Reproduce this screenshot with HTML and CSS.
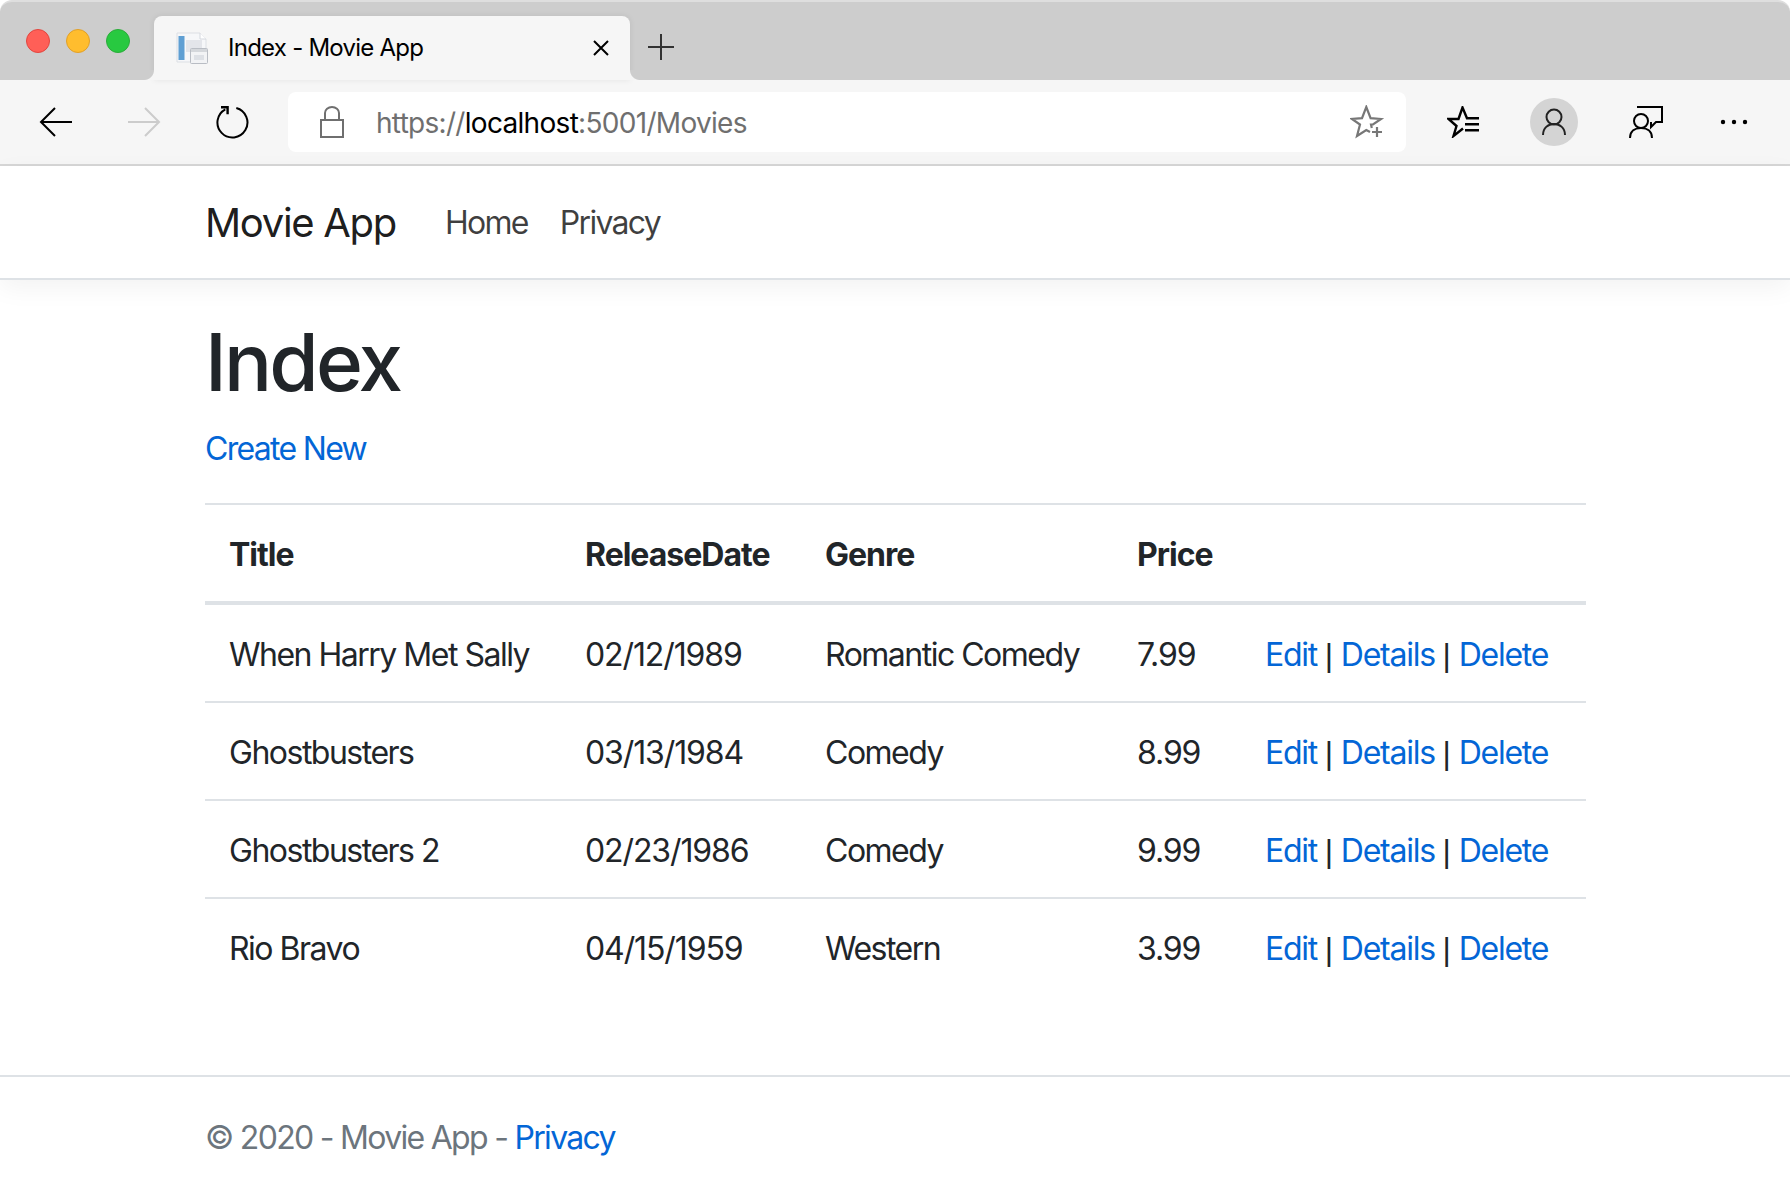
FILE: index.html
```html
<!DOCTYPE html>
<html lang="en">
<head>
    <meta charset="UTF-8">
    <title>Index - Movie App</title>
    <link rel="stylesheet" href="styles.css">
</head>
<body>

<div class="tabstrip">
    <span class="light light-red"></span>
    <span class="light light-yellow"></span>
    <span class="light light-green"></span>
    <div class="tab">
        <svg class="favicon" width="32" height="32" viewBox="0 0 32 32">
            <path d="M1 1h23l6 6v23H1z" fill="#f6f7f9" stroke="#dcdfe4"/>
            <rect x="2.500" y="4" width="6" height="24" fill="#5f9fd3"/>
            <rect x="10" y="8" width="16" height="12" fill="#e3e5ea"/>
            <path d="M24 1v6h6" fill="#fff" stroke="#d5d8de"/>
            <rect x="14.500" y="16.500" width="17" height="15" rx="1" fill="#f2f3f5" stroke="#b9bdc4"/>
            <rect x="15" y="17" width="16" height="3" fill="#d4d7db"/>
            <rect x="18" y="23" width="10" height="5" fill="#dde0e5"/>
        </svg>
        <span class="tab-title">Index - Movie App</span>
        <svg class="tab-close" width="18" height="18" viewBox="0 0 18 18">
            <path d="M2 2l14 14M16 2L2 16" stroke="#000" stroke-width="2" fill="none"/>
        </svg>
    </div>
    <svg class="tab-new" width="28" height="28" viewBox="0 0 28 28">
        <path d="M14 1v26M1 14h26" stroke="#333" stroke-width="2" fill="none"/>
    </svg>
</div>

<div class="toolbar">
    <span class="tool">
        <svg width="34" height="30" viewBox="0 0 34 30"><path d="M33 15H2M16 1L2 15l14 14" stroke="#000" stroke-width="2" fill="none"/></svg>
    </span>
    <span class="tool">
        <svg width="34" height="30" viewBox="0 0 34 30"><path d="M1 15h31M18 1l14 14-14 14" stroke="#ccc" stroke-width="2" fill="none"/></svg>
    </span>
    <span class="tool">
        <svg width="34" height="34" viewBox="0 0 34 34"><path d="M21.300 3A15 15 0 1 1 10.300 4.300" stroke="#000" stroke-width="2" fill="none"/><path d="M6 2.300h6.600v7" stroke="#000" stroke-width="2.400" fill="none"/></svg>
    </span>
    <div class="address">
        <svg class="lock" width="24" height="32" viewBox="0 0 24 32">
            <path d="M5 14V7a7 6 0 0 1 14 0v7" stroke="#6f6f6f" stroke-width="2" fill="none"/>
            <rect x="1" y="14" width="22" height="17" stroke="#6f6f6f" stroke-width="2" fill="none"/>
        </svg>
        <span class="url">https://<span class="url-host">localhost</span>:5001/Movies</span>
        <svg class="star-add" width="36" height="34" viewBox="0 0 36 34">
            <path d="M20 27l-3.700-2L7 31l3-11.500L2 14l10-.8L16.300 2l4.300 11.200 10.400.8-8 5.500-2 0 .8 3.500" stroke="#777" stroke-width="2.200" stroke-linejoin="miter" fill="none"/>
            <path d="M27 22v10M22 27h10" stroke="#777" stroke-width="2.200" fill="none"/>
        </svg>
    </div>
    <span class="tool tool-first">
        <svg width="34" height="32" viewBox="0 0 34 32"><path d="M32 12.300H20L15.500 1.500 11.500 13H1.500l8 7L6.500 30l9.500-7.500" stroke="#000" stroke-width="2.400" fill="none"/><path d="M18 18.300h14M18 24.300h14" stroke="#000" stroke-width="2.400" fill="none"/></svg>
    </span>
    <span class="tool">
        <span class="avatar">
            <svg width="24" height="28" viewBox="0 0 24 28"><circle cx="12" cy="9" r="7.500" stroke="#222" stroke-width="2" fill="none"/><path d="M1 27c0-7 5-11 11-11s11 4 11 11" stroke="#222" stroke-width="2" fill="none"/></svg>
        </span>
    </span>
    <span class="tool">
        <svg width="34" height="34" viewBox="0 0 34 34"><circle cx="12" cy="16" r="7" stroke="#000" stroke-width="2" fill="none"/><path d="M1 33c0-7 5-10 11-10s11 3 11 10M8 2h25v15h-6l-5 5v-5" stroke="#000" stroke-width="2" fill="none"/></svg>
    </span>
    <span class="tool tool-last">
        <svg width="28" height="6" viewBox="0 0 28 6"><circle cx="3" cy="3" r="2.200"/><circle cx="14" cy="3" r="2.200"/><circle cx="25" cy="3" r="2.200"/></svg>
    </span>
</div>

<nav class="navbar">
    <a class="brand" href="#">Movie App</a>
    <a class="nav-link" href="#">Home</a>
    <a class="nav-link" href="#">Privacy</a>
</nav>

<main class="container">
    <h1>Index</h1>
    <p class="create"><a href="#">Create New</a></p>

    <table class="movies">
        <colgroup>
            <col class="col-title">
            <col class="col-date">
            <col class="col-genre">
            <col class="col-price">
            <col class="col-actions">
        </colgroup>
        <thead>
            <tr>
                <th>Title</th>
                <th>ReleaseDate</th>
                <th>Genre</th>
                <th>Price</th>
                <th></th>
            </tr>
        </thead>
        <tbody>
            <tr>
                <td>When Harry Met Sally</td>
                <td class="num">02/12/1989</td>
                <td>Romantic Comedy</td>
                <td class="num">7.99</td>
                <td class="actions"><a href="#">Edit</a> <span class="sep">|</span> <a href="#">Details</a> <span class="sep">|</span> <a href="#">Delete</a></td>
            </tr>
            <tr>
                <td>Ghostbusters</td>
                <td class="num">03/13/1984</td>
                <td>Comedy</td>
                <td class="num">8.99</td>
                <td class="actions"><a href="#">Edit</a> <span class="sep">|</span> <a href="#">Details</a> <span class="sep">|</span> <a href="#">Delete</a></td>
            </tr>
            <tr>
                <td>Ghostbusters 2</td>
                <td class="num">02/23/1986</td>
                <td>Comedy</td>
                <td class="num">9.99</td>
                <td class="actions"><a href="#">Edit</a> <span class="sep">|</span> <a href="#">Details</a> <span class="sep">|</span> <a href="#">Delete</a></td>
            </tr>
            <tr>
                <td>Rio Bravo</td>
                <td class="num">04/15/1959</td>
                <td>Western</td>
                <td class="num">3.99</td>
                <td class="actions"><a href="#">Edit</a> <span class="sep">|</span> <a href="#">Details</a> <span class="sep">|</span> <a href="#">Delete</a></td>
            </tr>
        </tbody>
    </table>
</main>

<footer class="footer">
    <p>&copy; 2020 - Movie App - <a href="#">Privacy</a></p>
</footer>

</body>
</html>
```

FILE: styles.css
```css
body {
    font-family: Inter, "Liberation Sans", sans-serif;
    font-size: 32px;
    line-height: 48px;
    letter-spacing: -1.5px;
    color: #212529;
    background-color: #fff;
    margin: 0;
    padding: 0;
}
a {
    color: #0366d6;
    text-decoration: none;
}

/* browser chrome */
.tabstrip {
    display: flex;
    align-items: flex-start;
    height: 80px;
    padding-left: 26px;
    background-color: #cdcdcd;
    border-top: 2px solid #dedede;
    border-radius: 12px 12px 0 0;
    box-sizing: border-box;
}
.light {
    width: 24px;
    height: 24px;
    margin-top: 27px;
    margin-right: 16px;
    border-radius: 50%;
    box-sizing: border-box;
}
.light-red {
    background-color: #ff5f57;
    border: 1px solid #e2463f;
}
.light-yellow {
    background-color: #ffbd2e;
    border: 1px solid #e1a029;
}
.light-green {
    background-color: #28c940;
    border: 1px solid #2bac3a;
}
.tab {
    position: relative;
    display: flex;
    align-items: center;
    width: 476px;
    height: 64px;
    margin-top: 14px;
    margin-left: 8px;
    padding: 0 20px 0 22px;
    background-color: #f6f6f6;
    border-radius: 8px 8px 0 0;
    box-shadow: 0 0 6px rgba(0, 0, 0, 0.08);
    box-sizing: border-box;
}
.tab::before, .tab::after {
    content: "";
    position: absolute;
    bottom: 0;
    width: 10px;
    height: 10px;
}
.tab::before {
    left: -10px;
    background: radial-gradient(circle at 0 0, #cdcdcd 9.500px, #f6f6f6 10.500px);
}
.tab::after {
    right: -10px;
    background: radial-gradient(circle at 100% 0, #cdcdcd 9.500px, #f6f6f6 10.500px);
}
.tab-title {
    margin-left: 20px;
    font-size: 24px;
    letter-spacing: -0.75px;
    color: #000;
}
.tab-close {
    margin-left: auto;
}
.tab-new {
    margin-top: 31px;
    margin-left: 17px;
}
.toolbar {
    display: flex;
    align-items: center;
    height: 86px;
    padding-left: 12px;
    background-color: #f6f6f6;
    border-bottom: 2px solid #d6d6d6;
    box-sizing: border-box;
}
.tool {
    display: flex;
    align-items: center;
    justify-content: center;
    width: 88px;
    height: 60px;
    flex: none;
}
.tool-first {
    margin-left: 14px;
}
.tool-first ~ .tool {
    width: 92px;
}
.tool-first ~ .tool-last {
    width: 84px;
}
.address {
    display: flex;
    align-items: center;
    flex: 0 0 1118px;
    height: 60px;
    margin-left: 12px;
    padding: 0 20px 0 32px;
    background-color: #fff;
    border-radius: 8px;
    box-sizing: border-box;
}
.url {
    margin-left: 32px;
    padding-top: 1px;
    font-size: 28px;
    letter-spacing: -0.7px;
    color: #6f6f6f;
}
.url-host {
    color: #000;
}
.star-add {
    margin-left: auto;
}
.avatar {
    display: flex;
    align-items: center;
    justify-content: center;
    width: 48px;
    height: 48px;
    border-radius: 50%;
    background-color: #d4d4d4;
}

/* page */
.navbar {
    display: flex;
    align-items: center;
    height: 111px;
    padding-top: 1px;
    padding-left: 205px;
    border-bottom: 2px solid #dee2e6;
    box-shadow: 0 8px 24px rgba(0, 0, 0, 0.05);
}
.brand {
    font-size: 40px;
    margin-right: 33px;
    letter-spacing: -1.3px;
    color: rgba(0, 0, 0, 0.9);
}
.nav-link {
    padding: 0 16px;
    letter-spacing: -1.7px;
    color: rgba(0, 0, 0, 0.75);
}
.container {
    width: 1381px;
    margin-left: 205px;
    padding-top: 32px;
    padding-bottom: 48px;
}
h1 {
    font-size: 80px;
    line-height: 96px;
    font-weight: 500;
    letter-spacing: -2.8px;
    margin: 2px 0 15px 0;
}
.create {
    margin: 0 0 30px 0;
    letter-spacing: -1.7px;
}
.movies {
    width: 100%;
    table-layout: fixed;
    border-collapse: collapse;
    margin-bottom: 32px;
}
.col-title { width: 356px; }
.col-date { width: 240px; }
.col-genre { width: 312px; }
.col-price { width: 128px; }
.col-actions { width: 345px; }
.movies th, .movies td {
    padding: 26px 24px 22px 24px;
    text-align: left;
    white-space: nowrap;
    vertical-align: top;
    border-top: 2px solid #dee2e6;
}
.movies th {
    font-weight: 700;
    letter-spacing: -1px;
    border-bottom: 4px solid #dee2e6;
}
.movies td.num {
    letter-spacing: -1.1px;
}
.movies td.actions {
    letter-spacing: -1.25px;
}
.sep {
    font-family: "Liberation Sans", sans-serif;
    letter-spacing: 0;
}
.footer {
    border-top: 2px solid #dee2e6;
    padding-left: 205px;
    color: #6c757d;
}
.footer p {
    margin: 0;
    padding: 37px 0 30px 0;
    letter-spacing: -1.7px;
}
```
